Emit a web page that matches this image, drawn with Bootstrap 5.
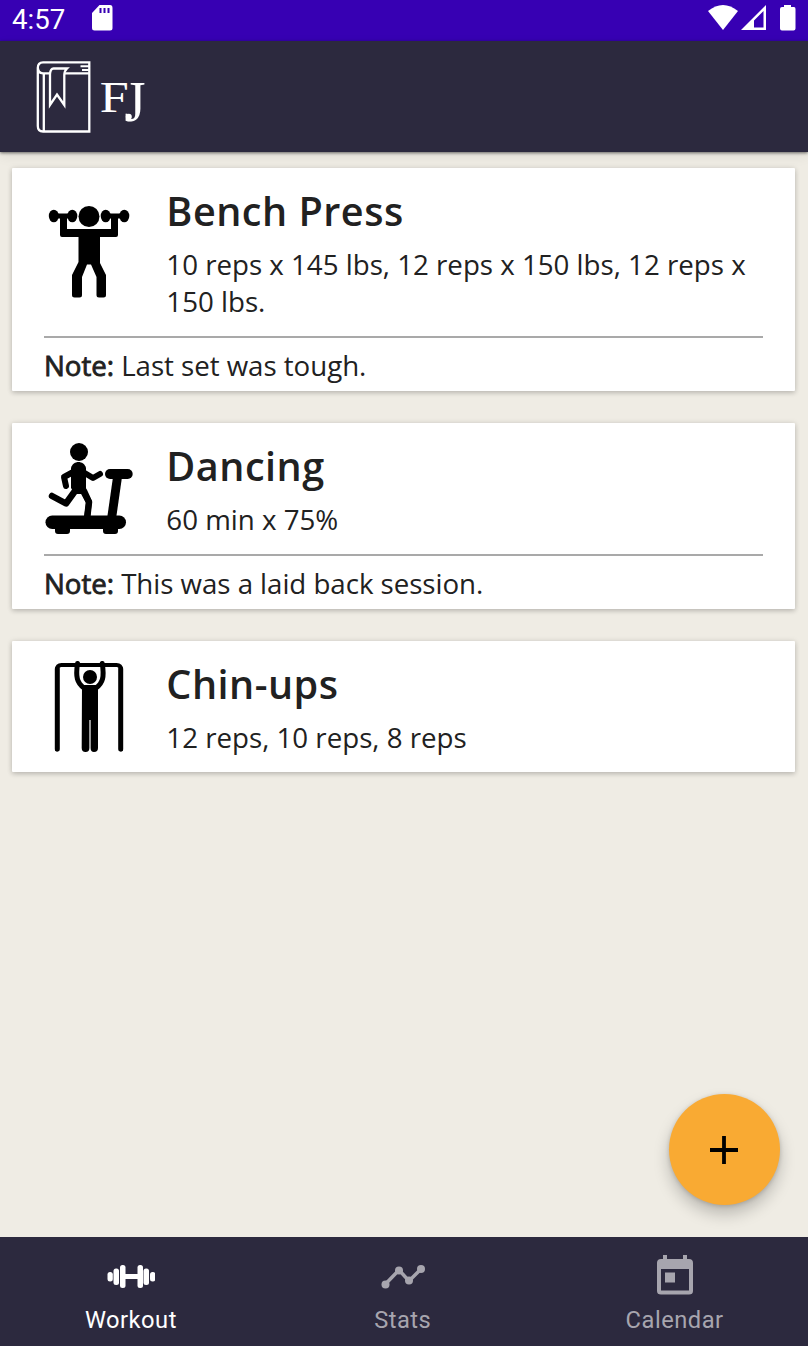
<!DOCTYPE html>
<html lang="en">
<head>
<meta charset="utf-8">
<meta name="viewport" content="width=device-width, initial-scale=1">
<title>Workout</title>
<link href="https://cdn.jsdelivr.net/npm/bootstrap@5.3.0/dist/css/bootstrap.min.css" rel="stylesheet">
<style>
  body { background: #efece4; color: #212121; font-family: "Open Sans", "Noto Sans", sans-serif; height: 1346px; overflow: hidden; }
  svg { display: block; flex: none; }
  .status-strip { height: 41px; background: #3700b3; color: #fff; font: 27.6px/40px Roboto, sans-serif; padding: 0 12px; }
  .sd-card { margin-left: 25px; }
  .app-header { height: 111px; background: #2c293e; box-shadow: 0 1px 3px rgba(0,0,0,.55), 0 4px 12px rgba(0,0,0,.07); padding-left: 34px; }
  .log-list { padding: 16px 13px 0 12px; gap: 32px; }
  .log-card { border: 0; border-radius: 1px; padding: 0 32px; box-shadow: 0 2px 5px rgba(0,0,0,.18), 0 0 6px rgba(0,0,0,.09); }
  .log-head { gap: 32.3px; padding-top: 18px; }
  .log-title { font-size: 39.6px; line-height: 50px; font-weight: 600; letter-spacing: .5px; margin: 0; }
  .log-sets { font-size: 27.7px; line-height: 37px; letter-spacing: 0; margin: 10px 0 0; }
  .log-note { border-top: 2px solid #a9a9a9; margin-top: 16px; padding: 9px 0 7px; font-size: 27.7px; line-height: 37px; letter-spacing: -.04px; }
  .note-label { -webkit-text-stroke: .8px #212121; }
  .log-card:last-child { padding-bottom: 16px; }
  .fab { width: 111px; height: 111px; background: #f9aa33; right: 28.500px; bottom: 141px; box-shadow: 0 9px 16px rgba(0,0,0,.22), 0 1px 4px rgba(0,0,0,.16); }
  .bottom-tabs { height: 109px; background: #2c293e; color: #a7a5ae; font: 23.7px/28px Roboto, sans-serif; letter-spacing: .5px; }
  .bottom-tabs .row { margin: 0 -2.500px 0 -5px; }
  .bottom-tabs a { color: inherit; padding-top: 16px; gap: 5px; }
  .bottom-tabs a.active { color: #fff; }
</style>
</head>
<body class="d-flex flex-column">
<div class="status-strip d-flex flex-shrink-0">
  <span>4:57</span>
  <svg class="ms-auto order-1" width="90" height="41" viewBox="706 0 90 41" fill="#fff">
    <path d="M708 11q15-12 30 0L723 30Z"/>
    <path fill-rule="evenodd" d="M741 30 766 5V30ZM754 27.500H763.500V11L754 20.500Z"/>
    <path d="M784 7V5H791V7H794Q795.500 7 795.500 9V28.500Q795.500 30.500 793.500 30.500H782Q780 30.500 780 28.500V9Q780 7 782 7Z"/>
  </svg>
  <svg class="sd-card" width="24" height="41" viewBox="90 0 24 41">
    <path fill="#fff" d="M99.500 5H110Q112.500 5 112.500 8V28Q112.500 30.500 110 30.500H94.500Q92 30.500 92 28V13Z"/>
    <path stroke="#3700b3" stroke-width="2" d="M100.500 8V13M104.500 8V13M108.500 8V13"/>
  </svg>
</div>

<header class="app-header flex-shrink-0 position-relative">
  <svg width="120" height="111" viewBox="34 41 120 111" fill="none" stroke="#fff" stroke-width="2.300">
    <path d="M89.300 62.300H43Q37.800 62.300 37.800 68V126Q37.800 131.500 43 131.500H89.300ZM37.800 67Q37.800 73.300 43 73.300H50M65 73.300H89.300M43.800 73.300V132"/>
    <path d="M50 105V74Q50.500 68.500 53.500 68.500H67Q64.300 71 64.300 75V105L57 94.500Z"/>
    <path d="M80.500 66.300H89M82 70H89" stroke-width="2"/>
    <g fill="#fff" font-family="Liberation Serif, serif">
      <text x="99.800" y="111.500" font-size="43.500" textLength="29" lengthAdjust="spacingAndGlyphs" stroke="none">F</text>
      <text x="124.500" y="121" font-size="56.500" textLength="21" lengthAdjust="spacingAndGlyphs" stroke="none">J</text>
      <circle cx="128.800" cy="116.800" r="3" stroke="none"/>
    </g>
  </svg>
</header>

<main class="log-list d-flex flex-column flex-grow-1">
  <article class="log-card card">
    <div class="log-head d-flex">
      <svg width="90" height="112" viewBox="44 186 90 112">
        <circle cx="89" cy="216.500" r="10.500"/>
        <path d="M53 213.500H73V218.500H67V229H111V218.500H105V213.500H125V218.500H118V235Q118 237 116 237H100V263L106 275V295Q106 297.500 103.500 297.500H99Q96.500 297.500 96.500 295V277L91 264.500H87L82 277V295Q82 297.500 79.500 297.500H74.500Q72 297.500 72 295V275L78.500 262V237H62Q60 237 60 235V218.500H53Z"/>
        <g><ellipse cx="53.800" cy="216" rx="5" ry="6.300"/><ellipse cx="72.300" cy="216" rx="5" ry="6.300"/><ellipse cx="105.700" cy="216" rx="5" ry="6.300"/><ellipse cx="124.300" cy="216" rx="5" ry="6.300"/></g>
      </svg>
      <div><h2 class="log-title">Bench Press</h2><p class="log-sets">10 reps x 145 lbs, 12 reps x 150 lbs, 12 reps x 150 lbs.</p></div>
    </div>
    <div class="log-note"><span class="note-label">Note:</span> Last set was tough.</div>
  </article>

  <article class="log-card card">
    <div class="log-head d-flex">
      <svg width="90" height="94" viewBox="44 441 90 94">
        <circle cx="79" cy="452" r="9"/>
        <path d="M71 468C73 460 84 460 86 468V488L83 494H75L71 488Z"/>
        <g fill="none" stroke="#000" stroke-width="6" stroke-linecap="round" stroke-linejoin="round">
          <path d="M75 471 64 477 66 486M83 472 93 478 100 474"/>
          <path d="M75 491 66 503.500 52 496M84 491 89 502 87 519" stroke-width="6.500"/>
        </g>
        <path d="M80 492 86 490 92 501 90 518H84L86 503Z"/>
        <path d="M113 477H122L116 519H107Z"/>
        <rect x="105" y="469" width="27.700" height="10" rx="5"/>
        <rect x="45.500" y="515.500" width="80.500" height="13.500" rx="6.700"/>
        <path d="M55 527H70V531Q70 534 67 534H58Q55 534 55 531ZM103 527H118V531Q118 534 115 534H106Q103 534 103 531Z"/>
      </svg>
      <div><h2 class="log-title">Dancing</h2><p class="log-sets">60 min x 75%</p></div>
    </div>
    <div class="log-note"><span class="note-label">Note:</span> This was a laid back session.</div>
  </article>

  <article class="log-card card">
    <div class="log-head d-flex">
      <svg width="90" height="94" viewBox="44 659 90 94">
        <path fill="none" stroke="#000" stroke-width="4" stroke-linecap="round" d="M57 749.500V669.500Q57 665 61.500 665H116.500Q121 665 121 669.500V749.500"/>
        <path stroke="#000" stroke-width="5" stroke-linecap="round" d="M120.700 749V669M57.300 749V669"/>
        <circle cx="90" cy="677" r="7"/>
        <path fill="none" stroke="#000" stroke-width="5" stroke-linecap="round" d="M77.500 663.500C75.500 677 77 683 84 688M102.300 663.500C104.300 677 103 683 96 688"/>
        <path d="M82 685H98V748Q98 752 94 752Q90.600 752 90.600 748V720H89.400V748Q89.400 752 85.500 752Q81.700 752 81.700 748Z"/>
      </svg>
      <div><h2 class="log-title">Chin-ups</h2><p class="log-sets">12 reps, 10 reps, 8 reps</p></div>
    </div>
  </article>
</main>

<div class="position-relative flex-shrink-0">
  <button class="fab btn rounded-circle position-absolute p-0 border-0 d-flex align-items-center justify-content-center" aria-label="Add">
    <svg width="28" height="28" viewBox="0 0 28 28"><path stroke="#000" stroke-width="3.800" d="M14 0V28M0 14H28"/></svg>
  </button>
  <nav class="bottom-tabs text-center">
    <div class="row gx-0">
      <a class="col active d-flex flex-column align-items-center text-decoration-none" href="#">
        <svg width="48" height="48" viewBox="107.500 1253 48 48" fill="#fff"><rect x="120.500" y="1265" width="5.500" height="23" rx="2.500"/><rect x="138" y="1265" width="5.500" height="23" rx="2.500"/><rect x="114" y="1268.500" width="5.500" height="16.500" rx="2.500"/><rect x="144" y="1268.500" width="5.500" height="16.500" rx="2.500"/><rect x="108" y="1272" width="5.300" height="9.500" rx="2.500"/><rect x="150.500" y="1272" width="5.300" height="9.500" rx="2.500"/><path d="M125 1274H139V1279H125Z"/></svg>
        <span>Workout</span>
      </a>
      <a class="col d-flex flex-column align-items-center text-decoration-none" href="#">
        <svg width="48" height="48" viewBox="379.500 1253 48 48" fill="#a7a5ae"><path fill="none" stroke="#a7a5ae" stroke-width="3.500" d="M386 1284 399.500 1270 409.500 1281 421.500 1269"/><circle cx="386" cy="1284.500" r="4"/><circle cx="399.500" cy="1270.500" r="4"/><circle cx="409.500" cy="1280.500" r="4"/><circle cx="421.500" cy="1269" r="4"/></svg>
        <span>Stats</span>
      </a>
      <a class="col d-flex flex-column align-items-center text-decoration-none" href="#">
        <svg width="48" height="48" viewBox="651 1253 48 48" fill="#a7a5ae"><path fill-rule="evenodd" d="M663 1259V1255H667V1259H683V1255H687V1259H689Q693 1259 693 1263V1291Q693 1294.500 689 1294.500H661Q657 1294.500 657 1291V1263Q657 1259 661 1259ZM661 1269V1290.500H689V1269Z"/><rect x="665" y="1272.500" width="10" height="10"/></svg>
        <span>Calendar</span>
      </a>
    </div>
  </nav>
</div>
<script src="https://cdn.jsdelivr.net/npm/bootstrap@5.3.0/dist/js/bootstrap.bundle.min.js"></script>
</body>
</html>
